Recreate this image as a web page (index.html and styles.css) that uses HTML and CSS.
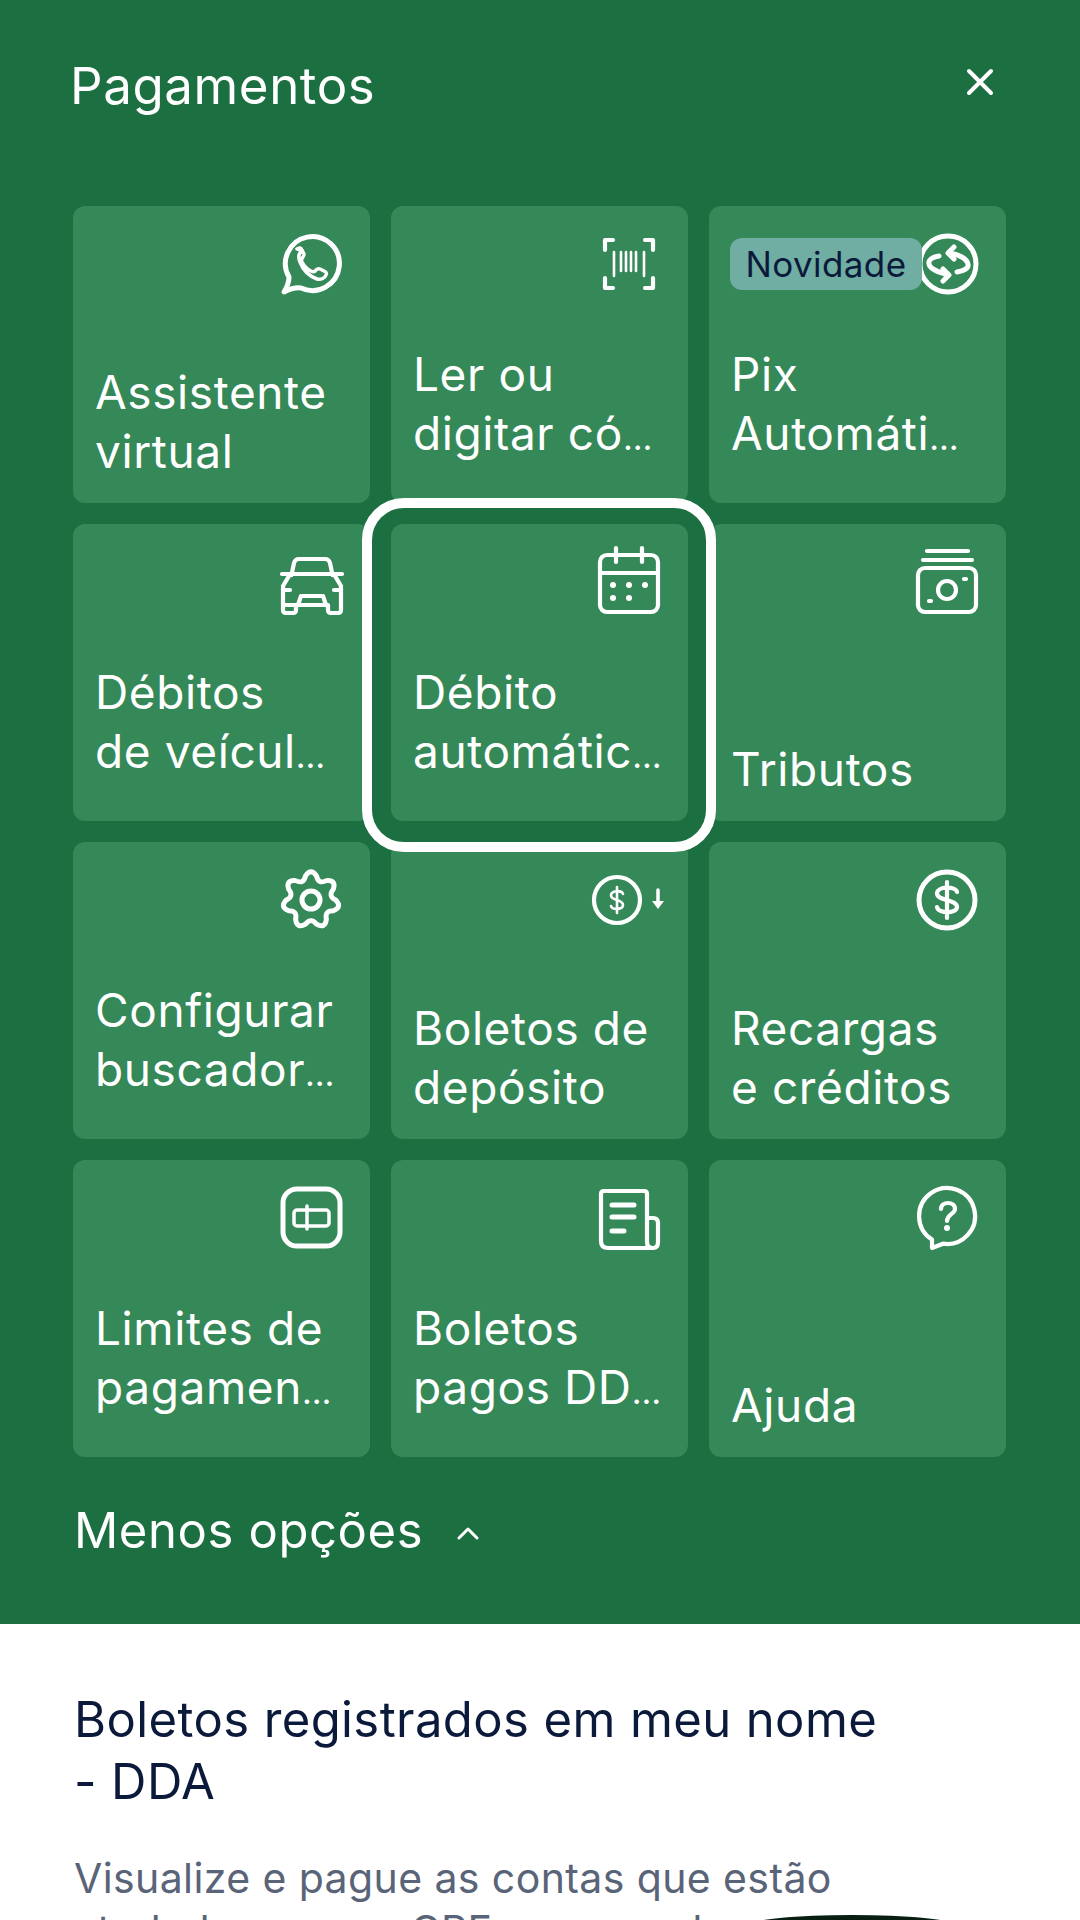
FILE: index.html
```html
<!DOCTYPE html>
<html lang="pt-BR">
<head>
  <meta charset="UTF-8" />
  <title>Pagamentos</title>
  <link rel="stylesheet" href="styles.css">
</head>
<body>

  <!-- Painel verde -->
  <section class="panel">
    <header class="panel-head">
      <h1>Pagamentos</h1>
      <svg class="close" viewBox="0 0 28 28"><path d="M3 3 L25 25 M25 3 L3 25"/></svg>
    </header>

    <div class="grid">
      <a class="card">
        <svg class="icon" viewBox="0 0 64 64">
          <path d="M9 45 A27 27 0 1 1 21 56 Q14 55 4 60 Q9 52 9 45 Z"/>
          <path class="thin" d="M22 19 c-3 2 -4 6 -2 11 c3 8 9 14 17 17 c4 1 8 -1 9 -4 c1 -2 0 -3 -2 -4 l-4 -2 c-2 -1 -3 0 -4 1 c-1 2 -3 2 -5 1 c-4 -2 -7 -5 -9 -9 c-1 -2 -1 -3 1 -5 c1 -1 1 -2 1 -3 l-2 -4 c-1 -2 -3 -3 -5 -1z"/>
        </svg>
        <span class="label">Assistente<br>virtual</span>
      </a>

      <a class="card cut">
        <svg class="icon" viewBox="0 0 64 64">
          <path class="mid" d="M7 18 V8 H15 M47 8 H55 V18 M7 46 V56 H15 M55 46 V56 H47"/>
          <path class="fine" d="M16 20 V44 M23 20 V39 M28 20 V39 M33 20 V39 M38 20 V39 M46 20 V44"/>
        </svg>
        <span class="label">Ler ou<br>digitar có<span class="more-dots">…</span></span>
      </a>

      <a class="card cut">
        <span class="badge">Novidade</span>
        <svg class="icon" viewBox="0 0 64 64">
          <circle cx="32" cy="32" r="28"/>
          <path d="M23 24 C16 25 12 28 13 32 C14 37 22 40 32 43 M27 37 L33 43 L27 49"/>
          <path d="M41 40 C48 39 53 36 52 32 C51 27 43 22 33 21 M38 15 L32 21 L38 27"/>
        </svg>
        <span class="label">Pix<br>Automáti<span class="more-dots">…</span></span>
      </a>

      <a class="card cut">
        <svg class="icon" viewBox="0 0 64 64">
          <path class="mid" d="M11.500 25 L14 13 Q15 9 19 9 H45 Q49 9 50 13 L52.500 25"/>
          <path class="mid" d="M2 24 H62 M9 26 L3 36 V60 Q3 63 6 63 H13 Q16 63 16 60 V55 H48 V60 Q48 63 51 63 H58 Q61 63 61 60 V36 L55 26"/>
          <path class="mid" d="M3 40 H10 M54 40 H61 M3 55 H16 M18 55 L21 46 H43 L46 55"/>
        </svg>
        <span class="label">Débitos<br>de veícul<span class="more-dots">…</span></span>
      </a>

      <a class="card cut selected">
        <svg class="icon" viewBox="0 0 64 64">
          <rect class="mid" x="2" y="5" width="58" height="57" rx="7"/>
          <path class="mid" d="M2 23 H60 M18 -2 V12 M44 -2 V12"/>
          <g class="dots">
            <circle cx="15" cy="35" r="3"/><circle cx="31" cy="35" r="3"/><circle cx="47" cy="35" r="3"/>
            <circle cx="15" cy="48" r="3"/><circle cx="31" cy="48" r="3"/>
          </g>
        </svg>
        <span class="label">Débito<br>automátic<span class="more-dots">…</span></span>
      </a>

      <a class="card">
        <svg class="icon" viewBox="0 0 64 64">
          <path class="mid" d="M11 1 H52 M7 10 H56"/>
          <rect class="mid" x="2" y="18" width="58" height="44" rx="7"/>
          <circle class="mid" cx="31" cy="40" r="9"/>
          <path class="mid" d="M48 29 H50 M13 51 H15"/>
        </svg>
        <span class="label">Tributos</span>
      </a>

      <a class="card cut">
        <svg class="icon" viewBox="0 0 64 64">
          <g transform="translate(3.100 3.200) scale(.9)">
            <path class="gear" d="M24.900 5.200 Q31 -4 37.100 5.200 Q39.200 14.900 48.100 10.500 Q59.200 9.600 55.800 20.100 Q49.500 27.800 58.500 32 Q66.100 40 55.800 43.900 Q45.900 43.800 48.100 53.500 Q46.600 64.400 37.100 58.800 Q31 51 24.900 58.800 Q15.400 64.400 13.900 53.500 Q16.100 43.800 6.200 43.900 Q-4.100 40 3.500 32 Q12.500 27.800 6.200 20.100 Q2.800 9.600 13.900 10.500 Q22.800 14.900 24.900 5.200Z"/>
          </g>
          <circle cx="31" cy="32" r="9"/>
        </svg>
        <span class="label">Configurar<br>buscador<span class="more-dots">…</span></span>
      </a>

      <a class="card">
        <svg class="icon" viewBox="0 0 64 64">
          <circle class="mid" cx="19" cy="32" r="23"/>
          <path class="fine" d="M25 26 C24 22 13 22 13 27.500 C13 33 25 31 25 37 C25 42 14 42 13 38 M19 19 V45"/>
          <path class="thin" d="M60 22 V33"/>
          <path class="solid" d="M54 33 H66 L60 41 Z"/>
        </svg>
        <span class="label">Boletos de<br>depósito</span>
      </a>

      <a class="card">
        <svg class="icon" viewBox="0 0 64 64">
          <circle cx="31" cy="32" r="28"/>
          <path class="mid" d="M41 24 C40 18 21 18 21 25.500 C21 33 41 31 41 39 C41 46 22 46 21 39 M31 14 V50"/>
        </svg>
        <span class="label">Recargas<br>e créditos</span>
      </a>

      <a class="card cut">
        <svg class="icon" viewBox="0 0 64 64">
          <rect x="3" y="3" width="57" height="57" rx="14"/>
          <rect class="thin" x="14" y="24" width="35" height="16" rx="3"/>
          <path class="thin" d="M27 20 V43"/>
        </svg>
        <span class="label">Limites de<br>pagamen<span class="more-dots">…</span></span>
      </a>

      <a class="card cut">
        <svg class="icon" viewBox="0 0 64 64">
          <path class="mid" d="M49 32 V8 Q49 5 46 5 H6 Q3 5 3 8 V55 Q3 62 10 62 H55 Q60 62 60 56 V37 Q60 32 55 32 H49 V56 Q49 62 55 62"/>
          <path d="M14 19 H36 M14 31 H36 M14 45 H26"/>
        </svg>
        <span class="label">Boletos<br>pagos DD<span class="more-dots">…</span></span>
      </a>

      <a class="card">
        <svg class="icon" viewBox="0 0 64 64">
          <path class="mid" d="M16 53.600 V62 L27 57.700 A28 28 0 1 0 16 53.600Z"/>
          <path class="mid" d="M25 23 C25 15 39 15 39 23 C39 28 31 28 31 35"/>
          <circle class="solid" cx="31" cy="42" r="3"/>
        </svg>
        <span class="label">Ajuda</span>
      </a>
    </div>

    <div class="more">
      <span>Menos opções</span>
      <svg class="chevron" viewBox="0 0 22 14"><path d="M2 12 L11 3 L20 12"/></svg>
    </div>
  </section>

  <!-- Conteudo branco -->
  <section class="info">
    <h2>Boletos registrados em meu nome<br>- DDA</h2>
    <p>Visualize e pague as contas que estão<br>atreladas ao seu CPF e que podem</p>
  </section>

  <div class="home-blob"></div>

</body>
</html>
```

FILE: styles.css
```css
* {
  box-sizing: border-box;
}

html, body {
  height: 1920px;
}

body {
  margin: 0;
  overflow: hidden;
  position: relative;
  font-family: 'Inter', 'Liberation Sans', sans-serif;
  background: #ffffff;
}

.panel {
  height: 1624px;
  padding: 45px 73px 0;
  background: #1b6f40;
  color: #ffffff;
}

.panel-head {
  display: flex;
  justify-content: space-between;
  align-items: center;
  height: 80px;
  margin: 0 0 81px -3px;
}

.panel-head h1 {
  margin: 0;
  font-size: 51px;
  font-weight: 400;
  letter-spacing: 0.6px;
}

.close {
  width: 28px;
  height: 28px;
  margin-right: 13px;
  margin-top: -6px;
}

.close path {
  fill: none;
  stroke: #ffffff;
  stroke-width: 4;
  stroke-linecap: round;
}

.grid {
  display: grid;
  grid-template-columns: repeat(3, 297px);
  grid-auto-rows: 297px;
  gap: 21px;
}

.card {
  position: relative;
  display: flex;
  flex-direction: column;
  justify-content: flex-end;
  padding: 0 10px 22px 22px;
  border-radius: 12px;
  background: #358858;
}

.card.cut {
  padding-bottom: 40px;
}

.icon {
  position: absolute;
  top: 26px;
  right: 26px;
  width: 64px;
  height: 64px;
  overflow: visible;
  fill: none;
  stroke: #ffffff;
  stroke-width: 5;
  stroke-linecap: round;
  stroke-linejoin: round;
}

.icon .mid {
  stroke-width: 4.2px;
}

.icon .thin {
  stroke-width: 3.5px;
}

.icon .fine {
  stroke-width: 2.6px;
}

.icon .gear {
  stroke-width: 5.5px;
}

.icon .solid,
.icon .dots {
  fill: #ffffff;
  stroke: none;
}

.label {
  font-size: 46px;
  line-height: 59px;
  letter-spacing: 0.6px;
  white-space: nowrap;
}

.more-dots {
  font-size: 34px;
  line-height: 0;
  letter-spacing: 0;
}

.badge {
  position: absolute;
  z-index: 1;
  top: 32px;
  left: 21px;
  width: 192px;
  height: 52px;
  border-radius: 12px;
  background: #70ada3;
  color: #0b1a3a;
  font-size: 35px;
  line-height: 52px;
  letter-spacing: 0.4px;
  text-align: center;
}

.selected {
  z-index: 2;
}

.selected::after {
  content: "";
  position: absolute;
  top: -26px;
  left: -29px;
  width: 354px;
  height: 354px;
  box-sizing: border-box;
  border: 10px solid #ffffff;
  border-radius: 42px;
}

.more {
  display: flex;
  align-items: center;
  gap: 34px;
  margin-top: 44px;
  margin-left: 1px;
  font-size: 49px;
  letter-spacing: 0.6px;
}

.chevron {
  width: 22px;
  height: 14px;
  margin-top: 4px;
}

.chevron path {
  fill: none;
  stroke: #ffffff;
  stroke-width: 3;
  stroke-linecap: round;
  stroke-linejoin: round;
}

.info {
  padding: 65px 74px 0;
}

.info h2 {
  margin: 0 0 39px;
  color: #0b1a3a;
  font-size: 49px;
  font-weight: 400;
  line-height: 62px;
  letter-spacing: 0.4px;
}

.info p {
  margin: 0;
  color: #5a6478;
  font-size: 41px;
  line-height: 52px;
  letter-spacing: 0.4px;
}

.home-blob {
  position: absolute;
  left: 750px;
  top: 1915px;
  width: 204px;
  height: 10px;
  border-radius: 50% 50% 0 0 / 100% 100% 0 0;
  background: #0a1f14;
}
```
